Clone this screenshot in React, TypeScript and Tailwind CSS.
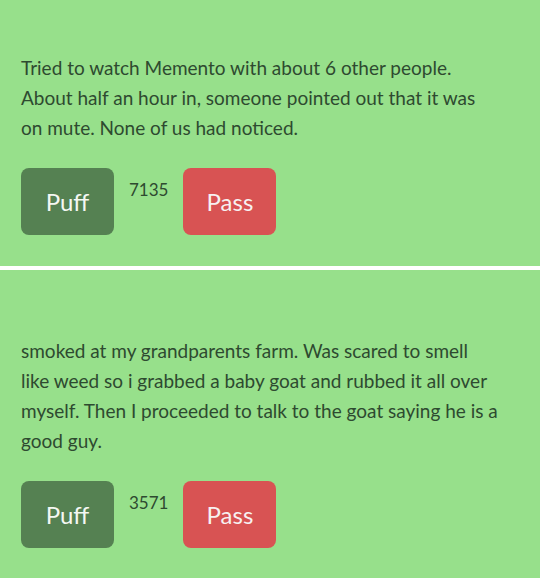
import React from 'react';

type Post = { lines: string[]; count: number; padTop: string };

const posts: Post[] = [
    {
        lines: [
            'Tried to watch Memento with about 6 other people.',
            'About half an hour in, someone pointed out that it was',
            'on mute. None of us had noticed.',
        ],
        count: 7135,
        padTop: 'pt-[53px]',
    },
    {
        lines: [
            'smoked at my grandparents farm. Was scared to smell',
            'like weed so i grabbed a baby goat and rubbed it all over',
            'myself. Then I proceeded to talk to the goat saying he is a',
            'good guy.',
        ],
        count: 3571,
        padTop: 'pt-[66px]',
    },
];

function PostCard({ post }: { post: Post }) {
    return (
        <div className={`bg-[#97e08b] px-[21px] pb-[31px] ${post.padTop}`}>
            {/* Post text */}
            <p className="text-[19px] leading-[30px] text-[#2e4a30] whitespace-nowrap">
                {post.lines.map((line, i) => (
                    <span key={i} className="block">{line}</span>
                ))}
            </p>

            {/* Vote row */}
            <div className="flex items-start gap-[15px] mt-[25px]">
                <button className="w-[93px] h-[67px] rounded-lg bg-[#558152] text-[#f4f7f2] text-[24px]">Puff</button>
                <span className="mt-[9px] text-[17px] text-[#2e4a30]">{post.count}</span>
                <button className="w-[93px] h-[67px] rounded-lg bg-[#d85353] text-[#f7f1f1] text-[24px]">Pass</button>
            </div>
        </div>
    );
}

export default function App() {
    return (
        <div className="w-[540px] h-[578px] overflow-hidden bg-[#97e08b] font-['Lato',_'Noto_Sans',_sans-serif]">
            <PostCard post={posts[0]} />
            <div className="h-[4px] bg-white" />
            <PostCard post={posts[1]} />
        </div>
    );
}
